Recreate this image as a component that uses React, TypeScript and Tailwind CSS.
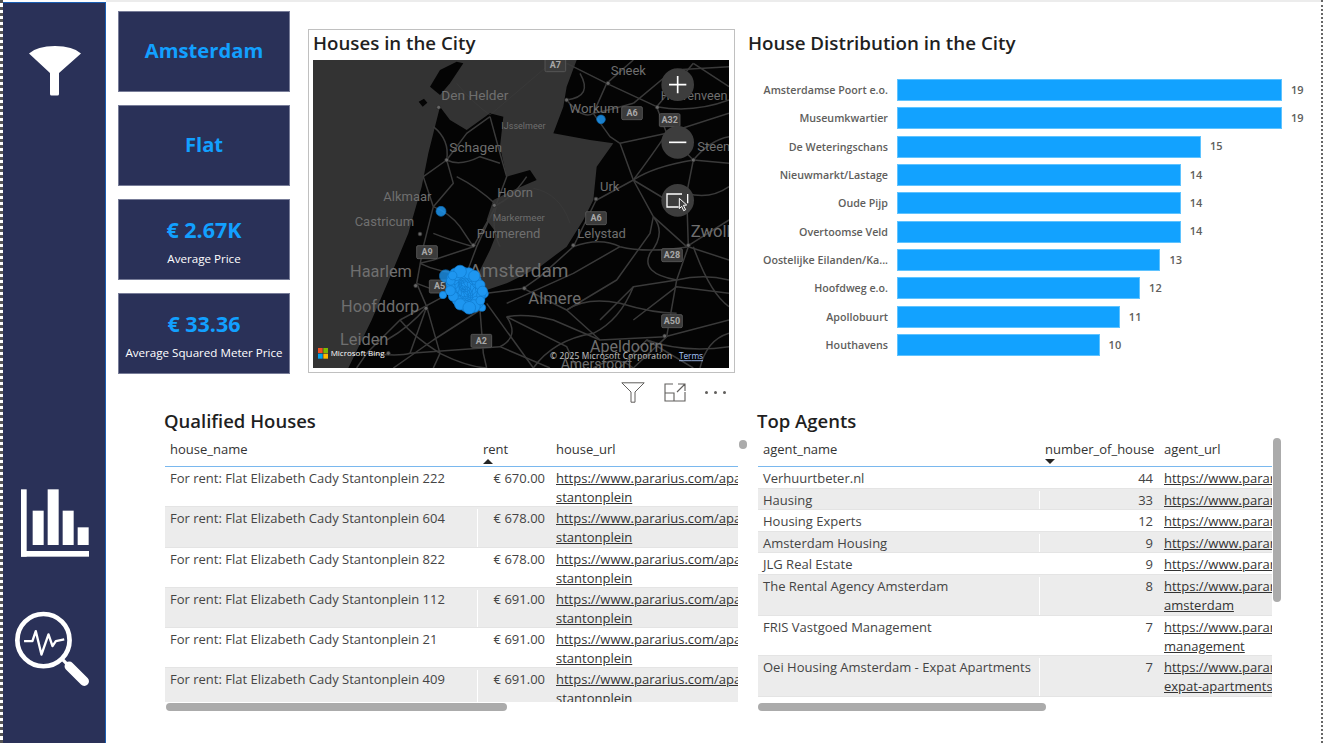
const font = "font-['Open_Sans','Noto_Sans',sans-serif]";

const bars = [
  { name: "Amsterdamse Poort e.o.", value: 19 },
  { name: "Museumkwartier", value: 19 },
  { name: "De Weteringschans", value: 15 },
  { name: "Nieuwmarkt/Lastage", value: 14 },
  { name: "Oude Pijp", value: 14 },
  { name: "Overtoomse Veld", value: 14 },
  { name: "Oostelijke Eilanden/Ka...", value: 13 },
  { name: "Hoofdweg e.o.", value: 12 },
  { name: "Apollobuurt", value: 11 },
  { name: "Houthavens", value: 10 },
];

const houses = [
  { name: "For rent: Flat Elizabeth Cady Stantonplein 222", rent: "€ 670.00" },
  { name: "For rent: Flat Elizabeth Cady Stantonplein 604", rent: "€ 678.00" },
  { name: "For rent: Flat Elizabeth Cady Stantonplein 822", rent: "€ 678.00" },
  { name: "For rent: Flat Elizabeth Cady Stantonplein 112", rent: "€ 691.00" },
  { name: "For rent: Flat Elizabeth Cady Stantonplein 21", rent: "€ 691.00" },
  { name: "For rent: Flat Elizabeth Cady Stantonplein 409", rent: "€ 691.00" },
];

const agents = [
  { name: "Verhuurtbeter.nl", count: 44 },
  { name: "Hausing", count: 33 },
  { name: "Housing Experts", count: 12 },
  { name: "Amsterdam Housing", count: 9 },
  { name: "JLG Real Estate", count: 9 },
  { name: "The Rental Agency Amsterdam", count: 8, extra: "amsterdam" },
  { name: "FRIS Vastgoed Management", count: 7, extra: "management" },
  { name: "Oei Housing Amsterdam - Expat Apartments", count: 7, extra: "expat-apartments" },
];

const roads = [
  "M570 290 L600 400 L620 470 L590 550 L530 680 L500 760",
  "M440 420 L460 490 L400 560",
  "M440 420 L500 340 L570 290",
  "M440 420 L370 470 L400 560 L370 680 L350 790 L380 860 L330 1000",
  "M590 555 L520 680 L400 720 L360 730",
  "M800 130 L920 190 L1070 260 L1180 130",
  "M920 190 L1000 120",
  "M920 190 L880 280 L930 350 L960 370 L1000 480 L1060 590 L1160 680 L1287 600",
  "M1070 260 L1100 340 L1180 420 L1287 430",
  "M1180 420 L1160 520 L1165 680 L1130 780 L1100 950 L1000 1044",
  "M960 370 L1100 340 L1287 280",
  "M1165 680 L1287 720",
  "M890 537 L820 680 L720 770 L670 805 L560 820",
  "M890 540 L1000 480 L1100 540 L1160 520",
  "M670 805 L800 870 L950 780 L1050 640 L1060 590",
  "M800 870 L900 960 L1095 950",
  "M560 850 L700 1044",
  "M540 870 L550 1000 L560 1044",
  "M620 850 L820 760 L960 680",
  "M1095 950 L1287 900",
  "M1287 820 L1130 800 L1000 900",
  "M430 830 L300 900 L200 1000 L170 1044",
  "M350 790 L430 820",
  "M380 860 L420 1000 L400 1044",
  "M330 1000 L600 980 L750 1044",
  "M620 890 L800 980 L830 1044",
  "M540 870 L400 960 L280 1044",
  "M960 1044 L1040 960 L1180 1044",
  "M1180 130 L1287 200",
  "M1000 250 L1120 150 L1287 140",
  "M900 900 L1000 800 L1130 780",
  "M400 320 Q450 360 440 420 Q480 440 540 410 L600 430",
  "M470 470 Q530 500 590 555 Q640 530 680 470",
  "M400 560 Q450 580 480 620 Q500 650 520 680",
  "M590 555 Q570 620 600 680",
  "M400 640 Q450 660 520 680",
  "M360 730 Q420 760 500 760",
  "M700 1044 Q760 960 880 940 Q960 900 1000 800",
  "M620 890 Q680 880 760 900 L900 960",
  "M1040 960 Q1150 1000 1287 980",
  "M1130 780 Q1210 760 1287 780",
  "M1160 520 Q1230 540 1287 500",
  "M1000 480 Q1060 440 1180 420",
  "M1060 590 Q1100 640 1050 700 Q1020 760 1130 780",
  "M1180 420 Q1230 360 1287 350",
  "M1070 260 Q1180 280 1287 240",
  "M800 240 Q850 300 880 280 Q930 270 1000 250",
  "M840 160 Q880 230 800 240",
  "M1100 340 Q1060 400 1000 480",
  "M300 900 Q340 950 420 1000",
  "M260 960 Q330 920 380 860",
  "M200 1000 Q300 1010 330 1000",
  "M600 980 Q660 950 620 890",
  "M420 1000 Q500 1040 560 1044",
  "M820 680 Q900 650 960 680 Q1040 700 1165 680",
  "M800 870 Q860 830 960 850 Q1060 880 1130 880",
  "M880 1044 Q950 1000 1000 1044",
  "M1200 1044 Q1220 960 1287 940",
  "M1180 680 Q1230 820 1287 860",
];

const waterRoads = ["M740 140 L570 285", "M700 505 Q780 520 810 610", "M570 285 Q520 250 470 190"];

const labels = [
  { t: "Sneek", x: 932, y: 165, s: 39 },
  { t: "Den Helder", x: 424, y: 240, s: 41 },
  { t: "Workum", x: 808, y: 278, s: 40 },
  { t: "Heerenveen", x: 1082, y: 240, s: 38 },
  { t: "IJsselmeer", x: 604, y: 326, s: 27 },
  { t: "Schagen", x: 448, y: 395, s: 41 },
  { t: "Steenwijk", x: 1192, y: 394, s: 39 },
  { t: "Alkmaar", x: 250, y: 543, s: 39 },
  { t: "Hoorn", x: 592, y: 531, s: 39 },
  { t: "Urk", x: 900, y: 512, s: 39 },
  { t: "Castricum", x: 164, y: 618, s: 39 },
  { t: "Markermeer", x: 578, y: 603, s: 29 },
  { t: "Purmerend", x: 530, y: 654, s: 39 },
  { t: "Lelystad", x: 832, y: 654, s: 39 },
  { t: "Zwolle", x: 1172, y: 652, s: 50 },
  { t: "Haarlem", x: 150, y: 770, s: 49 },
  { t: "Amsterdam", x: 508, y: 770, s: 57 },
  { t: "Hoofddorp", x: 123, y: 875, s: 49 },
  { t: "Almere", x: 685, y: 852, s: 50 },
  { t: "Leiden", x: 120, y: 975, s: 49 },
  { t: "Apeldoorn", x: 870, y: 997, s: 48 },
  { t: "Amersfoort", x: 782, y: 1048, s: 42 },
];

const shields = [
  { t: "A7", x: 735, y: 116 },
  { t: "A6", x: 965, y: 260 },
  { t: "A32", x: 1078, y: 281 },
  { t: "A6", x: 857, y: 575 },
  { t: "A9", x: 350, y: 677 },
  { t: "A28", x: 1085, y: 686 },
  { t: "A5", x: 388, y: 780 },
  { t: "A50", x: 1085, y: 884 },
  { t: "A2", x: 513, y: 943 },
];

const towns = [
  [416, 262], [800, 240], [924, 190], [1072, 262], [440, 420], [1180, 420], [583, 556], [888, 537],
  [360, 642], [520, 676], [820, 676], [1165, 676], [347, 797], [673, 805], [378, 865], [1094, 948], [265, 1000],
];

// blue bubbles of the Amsterdam cluster, spread with a small fixed sequence
const cluster = Array.from({ length: 90 }, (_, i) => {
  const a = i * 2.399;
  const r = Math.sqrt(i / 90);
  return { x: 490 + Math.cos(a) * r * 50 + r * 8, y: 808 + Math.sin(a) * r * 55 + Math.cos(a) * r * 12, r: 13 + (i % 4) * 2 };
});

function MapDrawing() {
  return (
    <svg viewBox="39 120 1248 924" className="block h-[308px] w-[416px]">
      <rect x="39" y="120" width="1248" height="924" fill="#333333" />
      <path
        d="M420 260 L385 400 L365 500 L325 640 L275 760 L215 900 L145 1044 L1287 1044 L1287 120 L830 120 L800 200 L790 260 L760 340 L870 360 L940 370 L890 440 L880 540 L850 600 L800 680 L720 740 L620 790 L560 810 L530 770 L570 690 L590 640 L560 600 L580 540 L640 510 L710 480 L690 450 L620 470 L600 380 L610 290 L570 280 L500 330 L450 300 Z"
        fill="#040404"
      />
      <path d="M390 200 L420 150 L470 125 L490 130 L450 190 L420 225 Z" fill="#040404" />
      <path d="M356 245 L372 236 L382 248 L368 260 Z" fill="#040404" />
      <g fill="none" stroke="#3e3e3e" strokeWidth="1.5">
        {waterRoads.map((d) => (
          <path key={d} d={d} />
        ))}
      </g>
      <g fill="none" stroke="#3a3a3a" strokeWidth="4.5" strokeLinejoin="round">
        {roads.map((d) => (
          <path key={d} d={d} />
        ))}
      </g>
      {towns.map(([x, y]) => (
        <circle key={`${x}-${y}`} cx={x} cy={y} r="6" fill="#666666" stroke="#222222" strokeWidth="2" />
      ))}
      <g fontFamily="Roboto, sans-serif" fill="#6f6f6f">
        {labels.map((l) => (
          <text key={l.t} x={l.x} y={l.y} fontSize={l.s}>
            {l.t}
          </text>
        ))}
      </g>
      {shields.map((s) => (
        <g key={`${s.t}-${s.x}`}>
          <rect x={s.x} y={s.y} width="62" height="39" rx="4" fill="#3b3b3b" stroke="#5a5a5a" strokeWidth="2.5" />
          <text x={s.x + 31} y={s.y + 28} fontSize="27" fontWeight="700" fill="#a8a8a8" textAnchor="middle" fontFamily="Roboto, sans-serif">
            {s.t}
          </text>
        </g>
      ))}
      <g fill="#1e96f0" stroke="#0f78cc" strokeWidth="2">
        <circle cx="903" cy="298" r="13" opacity="0.85" />
        <circle cx="423" cy="574" r="15" opacity="0.85" />
        <circle cx="437" cy="768" r="19" opacity="0.8" />
        <circle cx="552" cy="821" r="13" />
        <circle cx="546" cy="863" r="11" />
        <circle cx="524" cy="865" r="11" />
        <circle cx="429" cy="825" r="11" />
        {cluster.map((c, i) => (
          <circle key={i} cx={c.x} cy={c.y} r={c.r} />
        ))}
      </g>
      <circle cx="1133" cy="194" r="49" fill="#3d3d3d" />
      <path d="M1133 168 V220 M1107 194 H1159" stroke="#ffffff" strokeWidth="5" fill="none" />
      <circle cx="1133" cy="367" r="49" fill="#3d3d3d" />
      <path d="M1107 367 H1159" stroke="#ffffff" strokeWidth="5" fill="none" />
      <circle cx="1133" cy="541" r="49" fill="#3d3d3d" />
      <path d="M1146 522 H1101 V561 H1136 M1163 522 V550" stroke="#ffffff" strokeWidth="4" fill="none" />
      <path d="M1138 535 L1160 555 L1150 556 L1157 569 L1151 572 L1145 559 L1138 566 Z" fill="#3d3d3d" stroke="#ffffff" strokeWidth="3" />
      <rect x="54" y="984" width="14" height="15" fill="#f25022" />
      <rect x="70" y="984" width="14" height="15" fill="#7fba00" />
      <rect x="54" y="1001" width="14" height="15" fill="#00a4ef" />
      <rect x="70" y="1001" width="14" height="15" fill="#ffb900" />
      <text x="92" y="1008" fontSize="24" fill="#ffffff" fontFamily="'Open Sans', sans-serif">
        Microsoft Bing
      </text>
      <text x="750" y="1018" fontSize="25" fill="#ffffff" stroke="#000000" strokeWidth="0.5" fontFamily="'Open Sans', sans-serif" textLength="366">
        © 2025 Microsoft Corporation
      </text>
      <text x="1137" y="1018" fontSize="25" fill="#a9c8ff" textDecoration="underline" fontFamily="'Open Sans', sans-serif" textLength="72">
        Terms
      </text>
    </svg>
  );
}

function FunnelIcon() {
  return (
    <svg viewBox="0 0 52 50" className="block h-[50px] w-[52px]">
      <path d="M0 7.5 Q8 0 26 0 Q44 0 52 7.5 L30 27 V48 Q30 49.5 28.5 49.5 H22.5 Q21 49.5 21 48 V27 Z" fill="#ffffff" />
    </svg>
  );
}

function BarsIcon() {
  return (
    <svg viewBox="63 58 204 202" className="block h-[68px] w-[68px]" fill="#ffffff">
      <rect x="63" y="58" width="17" height="202" />
      <rect x="63" y="243" width="204" height="17" />
      <rect x="98" y="122" width="33" height="103" />
      <rect x="143" y="58" width="33" height="167" />
      <rect x="188" y="122" width="33" height="103" />
      <rect x="233" y="172" width="33" height="53" />
    </svg>
  );
}

function SearchPulseIcon() {
  return (
    <svg viewBox="40 420 230 230" className="block h-[77px] w-[77px]" fill="none" stroke="#ffffff">
      <circle cx="128" cy="507" r="78" strokeWidth="14" />
      <path d="M186 566 L200 580" strokeWidth="10" />
      <path d="M205 585 L250 630" strokeWidth="28" strokeLinecap="round" />
      <path d="M70 510 H95 L105 480 L122 550 L143 490 L155 525 L165 510 L190 505" strokeWidth="7" strokeLinejoin="round" />
    </svg>
  );
}

function StatCard({ value, label }: { value: string; label?: string }) {
  return (
    <div className="flex h-[81px] w-[172px] flex-col items-center justify-center border border-[#777c98] bg-[#2a3158]">
      <div className={`leading-[28px] font-bold text-[#12a0ff] ${label ? "text-[21.5px]" : "-mt-[3px] text-[20.2px]"}`}>{value}</div>
      {label && <div className="mt-[7px] -mb-[4px] text-[11.6px] leading-[16px] text-white">{label}</div>}
    </div>
  );
}

function UrlCell({ lines, width }: { lines: string[]; width: string }) {
  return (
    <div className={`overflow-hidden pl-[6px] text-[#333333] underline ${width}`}>
      {lines.map((l) => (
        <div key={l} className="h-[19px] leading-[19px] whitespace-nowrap">
          {l}
        </div>
      ))}
    </div>
  );
}

export default function App() {
  return (
    <div className={`flex h-[743px] w-[1324px] overflow-hidden bg-white ${font}`}>
      <div className="w-[3px] border-l-[3px] border-dotted border-[#555555]" />

      <div className="mt-[2px] flex h-[741px] w-[103px] flex-col items-center border-t border-r border-[#1a5fb4] bg-[#2a3158]">
        <div className="mt-[43px] ml-[2px]">
          <FunnelIcon />
        </div>
        <div className="mt-[393px] ml-[2px]">
          <BarsIcon />
        </div>
        <div className="mt-[54px] mr-[4px]">
          <SearchPulseIcon />
        </div>
      </div>

      <div className="flex-1 border-t-2 border-[#ececec]">
        <div className="flex h-[409px] items-start pt-[9px]">
          <div className="ml-[12px] flex w-[172px] flex-col gap-[13px]">
            <StatCard value="Amsterdam" />
            <StatCard value="Flat" />
            <StatCard value="€ 2.67K" label="Average Price" />
            <StatCard value="€ 33.36" label="Average Squared Meter Price" />
          </div>

          <div className="mt-[18px] ml-[18px] w-[427px]">
            <div className="border border-[#c0c0c0] px-[4px] pb-[4px]">
              <h2 className="h-[30px] text-[18.7px] leading-[26px] font-semibold text-[#1f1f1f]">Houses in the City</h2>
              <MapDrawing />
            </div>
            <div className="mt-[9px] flex items-center justify-end gap-[19px] pr-[9px]">
              <svg viewBox="0 0 24 21" className="h-[21px] w-[24px]" fill="none" stroke="#605e5c" strokeWidth="1">
                <path d="M0.8 0.8 H23.2 L14 10 V20.2 H10 V10 Z" />
              </svg>
              <svg viewBox="0 0 22 19" className="h-[19px] w-[22px]" fill="none" stroke="#605e5c" strokeWidth="1.1">
                <path d="M9 1 H1 V18 H21 V9 M1 10 H10 V18 M14 1 H21 V8 M21 1 L13 9" />
              </svg>
              <div className="flex gap-[5.5px]">
                <span className="h-[3.5px] w-[3.5px] rounded-full bg-[#605e5c]" />
                <span className="h-[3.5px] w-[3.5px] rounded-full bg-[#605e5c]" />
                <span className="h-[3.5px] w-[3.5px] rounded-full bg-[#605e5c]" />
              </div>
            </div>
          </div>

          <div className="mt-[18px] ml-[13px] w-[560px]">
            <h2 className="h-[30px] text-[18.8px] leading-[28px] font-semibold text-[#1f1f1f]">House Distribution in the City</h2>
            <div className="mt-[20px] flex flex-col gap-[6.35px]">
              {bars.map((b) => (
                <div key={b.name} className="flex h-[22px] items-center">
                  <div className="w-[140px] text-right text-[10.7px] font-semibold whitespace-nowrap text-[#605e5c]">{b.name}</div>
                  <div className="ml-[9px] h-[22px] border border-[#5fc3ff] bg-[#12a2ff]" style={{ width: b.value * 20.26 }} />
                  <div className="ml-[9px] text-[11px] font-semibold text-[#605e5c]">{b.value}</div>
                </div>
              ))}
            </div>
          </div>
        </div>

        <div className="flex text-[13px] text-[#444444]">
          <div className="relative ml-[59px] w-[573px]">
            <h2 className="-ml-[1px] h-[30px] text-[18.5px] leading-[20px] font-semibold text-[#1f1f1f]">Qualified Houses</h2>
            <div className="flex h-[26px] border-b border-[#7ab8ee] leading-[16px] text-[#333333]">
              <div className="w-[312px] pl-[5px]">house_name</div>
              <div className="relative w-[73px] pl-[6px]">
                rent
                <span className="absolute top-[18px] left-[6px] h-0 w-0 border-x-[5px] border-b-[5px] border-x-transparent border-b-[#252423]" />
              </div>
              <div className="pl-[6px]">house_url</div>
            </div>
            <div className="h-[235px] overflow-hidden">
              {houses.map((h, i) => (
                <div key={h.name} className={`flex h-[40.3px] border-b border-[#e4e4e4] pt-[2px] ${i % 2 ? "bg-[#ececec]" : "bg-white"}`}>
                  <div className="w-[312px] pl-[5px] leading-[19px] whitespace-nowrap">{h.name}</div>
                  <div className="w-[73px] border-l border-white pr-[5px] text-right leading-[19px]">{h.rent}</div>
                  <UrlCell lines={["https://www.pararius.com/apartment-for-rent", "stantonplein"]} width="w-[188px]" />
                </div>
              ))}
            </div>
            <div className="mt-[1px] ml-[1px] h-[8px] w-[341px] rounded-full bg-[#ababab]" />
            <span className="absolute top-[29px] -right-[9px] h-[9px] w-[8px] rounded-full bg-[#ababab]" />
          </div>

          <div className="relative ml-[20px] w-[514px]">
            <h2 className="-ml-[1px] h-[30px] text-[18.5px] leading-[20px] font-semibold text-[#1f1f1f]">Top Agents</h2>
            <div className="flex h-[26px] border-b border-[#7ab8ee] leading-[16px] text-[#333333]">
              <div className="w-[281px] pl-[5px]">agent_name</div>
              <div className="relative w-[119px] pl-[6px]">
                number_of_house
                <span className="absolute top-[18px] left-[6px] h-0 w-0 border-x-[5px] border-t-[5px] border-x-transparent border-t-[#252423]" />
              </div>
              <div className="pl-[6px]">agent_url</div>
            </div>
            <div>
              {agents.map((a, i) => (
                <div
                  key={a.name}
                  className={`flex border-b border-[#e4e4e4] pt-[2px] ${a.extra ? "h-[40.6px]" : "h-[21.6px]"} ${i % 2 ? "bg-[#ececec]" : "bg-white"}`}
                >
                  <div className="w-[281px] pl-[5px] leading-[19px] whitespace-nowrap">{a.name}</div>
                  <div className="w-[119px] border-l border-white pr-[5px] text-right leading-[19px]">{a.count}</div>
                  <UrlCell lines={a.extra ? ["https://www.pararius.com/real-estate-agents", a.extra] : ["https://www.pararius.com/real-estate-agents"]} width="w-[114px]" />
                </div>
              ))}
            </div>
            <div className="mt-[6px] h-[8px] w-[288px] rounded-full bg-[#ababab]" />
            <span className="absolute top-[27px] left-[515px] h-[164px] w-[8px] rounded-full bg-[#ababab]" />
          </div>
        </div>
      </div>

      <div className="mr-[1px] w-[2px] border-r-2 border-dotted border-[#666666]" />
    </div>
  );
}
